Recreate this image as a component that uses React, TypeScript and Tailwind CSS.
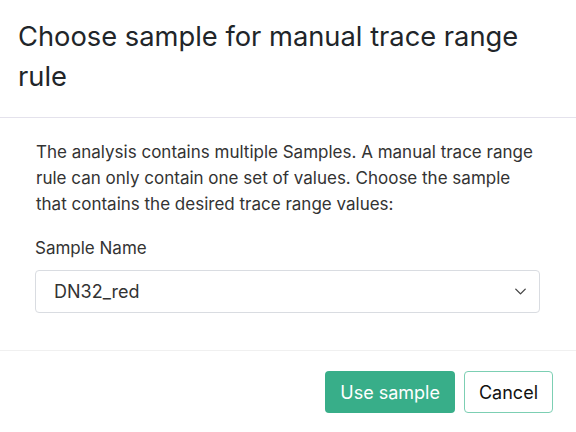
import { ChevronDown } from "lucide-react";

export default function App() {
  return (
    <div className="flex h-[432px] w-[576px] flex-col bg-white font-['Inter',sans-serif] text-[#212529]">
      {/* Header */}
      <div className="border-b border-[#e4e2ec] px-[18px] pb-[20px] pt-[17px]">
        <h2 className="text-[27.3px] leading-[40px] font-normal">
          Choose sample for manual trace range rule
        </h2>
      </div>

      {/* Body */}
      <div className="flex-1 pl-[35px] pr-[36px] pt-[21px]">
        <p className="pl-px text-[17px] leading-[26px] text-[#333]">
          The analysis contains multiple Samples. A manual trace range rule can only contain one
          set of values. Choose the sample that contains the desired trace range values:
        </p>
        <label className="mt-[19px] block text-[17px] leading-[24px] text-[#333]">Sample Name</label>
        <div className="mt-[10px] flex h-[43px] items-center justify-between rounded-[4px] border border-[#d9dce1] pl-[18px] pr-[9px]">
          <span className="text-[18px] text-[#333]">DN32_red</span>
          <ChevronDown size={19} strokeWidth={1.7} className="text-[#444]" />
        </div>
      </div>

      {/* Footer */}
      <div className="flex justify-end gap-[9px] border-t border-[#f0f0f0] px-[23px] pb-[19px] pt-[20px]">
        <button className="h-[42px] rounded-[4px] bg-[#38ae89] px-[15px] text-[18px] text-white">
          Use sample
        </button>
        <button className="h-[42px] rounded-[4px] border border-[#7ccfb3] bg-white px-[14px] text-[18px] text-[#111]">
          Cancel
        </button>
      </div>
    </div>
  );
}
